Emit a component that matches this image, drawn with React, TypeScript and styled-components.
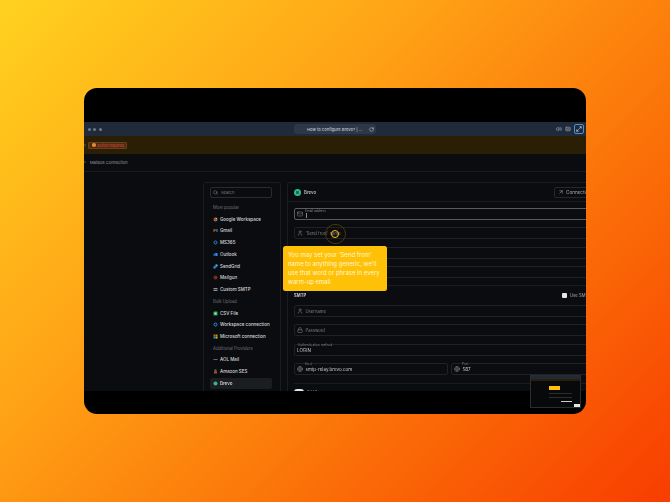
import React from "react";
import styled, {createGlobalStyle} from "styled-components";
import {ArrowUpRight, Captions, ChevronRight, Globe, Lock, Mail, Maximize2, RotateCw, Search, User, Volume2} from "lucide-react";

const GlobalStyle = createGlobalStyle`
  html, body {
    margin: 0;
    padding: 0;
  }
  body {
    font-family: Inter, "Liberation Sans", sans-serif;
  }
`;

const icons: Record<string, React.ReactNode> = {
  google: (
    <>
      <path d="M1 5a4 4 0 0 1 4-4v4z" fill="#ea4335" />
      <path d="M5 1a4 4 0 0 1 4 4H5z" fill="#fbbc05" />
      <path d="M9 5a4 4 0 0 1-4 4V5z" fill="#4285f4" />
      <path d="M5 9a4 4 0 0 1-4-4h4z" fill="#e8622a" />
    </>
  ),
  gmail: (
    <>
      <rect x="1" y="2" width="2" height="6" fill="#ea4335" />
      <rect x="3" y="3" width="2" height="2" fill="#fbbc05" />
      <rect x="5" y="3" width="2" height="2" fill="#34a853" />
      <rect x="7" y="2" width="2" height="6" fill="#4285f4" />
    </>
  ),
  ms365: <circle cx="5" cy="5" r="3" fill="none" stroke="#3b82d6" strokeWidth="2" />,
  outlook: (
    <>
      <rect x="4" y="2" width="5" height="6" fill="#2f8fd8" />
      <rect x="1" y="3" width="5" height="5" fill="#1667b5" />
    </>
  ),
  sendgrid: (
    <>
      <rect x="1" y="5" width="4" height="4" fill="#3aa3e3" />
      <rect x="5" y="1" width="4" height="4" fill="#7ec8f0" />
      <rect x="3" y="3" width="4" height="4" fill="#1a82c4" />
    </>
  ),
  mailgun: <circle cx="5" cy="5" r="4" fill="#7a2c1c" />,
  smtp: (
    <>
      <rect x="1" y="2" width="8" height="2.4" fill="#8d9096" />
      <rect x="1" y="5.6" width="8" height="2.4" fill="#8d9096" />
    </>
  ),
  csv: (
    <>
      <rect x="1" y="1" width="8" height="8" rx="1" fill="#2fa65a" />
      <rect x="3" y="3.5" width="4" height="3" fill="#bde8cd" />
    </>
  ),
  workspace: <circle cx="5" cy="5" r="3" fill="none" stroke="#2f8fe8" strokeWidth="2" />,
  microsoft: (
    <>
      <rect x="1" y="1" width="3.8" height="3.8" fill="#f25022" />
      <rect x="5.2" y="1" width="3.8" height="3.8" fill="#7fba00" />
      <rect x="1" y="5.2" width="3.8" height="3.8" fill="#00a4ef" />
      <rect x="5.2" y="5.2" width="3.8" height="3.8" fill="#ffb900" />
    </>
  ),
  aol: <rect x="1" y="4.4" width="8" height="1.2" fill="#a5a7ab" />,
  ses: (
    <>
      <rect x="3" y="1" width="4" height="4" fill="#8a6a4a" />
      <rect x="2" y="5" width="6" height="4" fill="#a8541f" />
    </>
  ),
  brevo: <circle cx="5" cy="5" r="4" fill="#2fb98f" />,
};

type Provider = {name: string; icon: string};

const popular: Provider[] = [
  {name: "Google Workspace", icon: "google"},
  {name: "Gmail", icon: "gmail"},
  {name: "MS365", icon: "ms365"},
  {name: "Outlook", icon: "outlook"},
  {name: "SendGrid", icon: "sendgrid"},
  {name: "Mailgun", icon: "mailgun"},
  {name: "Custom SMTP", icon: "smtp"},
];

const bulk: Provider[] = [
  {name: "CSV File", icon: "csv"},
  {name: "Workspace connection", icon: "workspace"},
  {name: "Microsoft connection", icon: "microsoft"},
];

const additional: Provider[] = [
  {name: "AOL Mail", icon: "aol"},
  {name: "Amazon SES", icon: "ses"},
  {name: "Brevo", icon: "brevo"},
];

function ProviderRow({provider}: {provider: Provider}) {
  return (
    <Row $active={provider.name === "Brevo"}>
      <RowIcon viewBox="0 0 10 10">{icons[provider.icon]}</RowIcon>
      {provider.name}
    </Row>
  );
}

export default function App() {
  return (
    <Page>
      <GlobalStyle />
      <Frame>
        <TopBlack />
        <Toolbar>
          <Dots>
            <Dot />
            <Dot />
            <Dot />
          </Dots>
          <UrlPill>
            <UrlText>How to configure Brevo? | ...</UrlText>
            <RotateCw size={5} strokeWidth={2.5} />
          </UrlPill>
          <ToolIcons>
            <Volume2 size={6} strokeWidth={2.5} />
            <Captions size={6} strokeWidth={2.5} />
            <ExpandButton>
              <Maximize2 size={6} strokeWidth={2.5} />
            </ExpandButton>
          </ToolIcons>
        </Toolbar>
        <AlertBand>
          <EdgeMark>›</EdgeMark>
          <AlertBadge>
            <AlertDot />
            Action required
            <ChevronRight size={4} strokeWidth={2.5} />
          </AlertBadge>
        </AlertBand>
        <NavBand>
          <EdgeMark>›</EdgeMark>
          <NavTitle>Mailbox Connection</NavTitle>
        </NavBand>
        <Content>
          <Sidebar>
            <SearchBox>
              <Search size={5} strokeWidth={2.5} />
              Search
            </SearchBox>
            <GroupLabel>Most popular</GroupLabel>
            {popular.map((p) => (
              <ProviderRow key={p.name} provider={p} />
            ))}
            <GroupLabel>Bulk Upload</GroupLabel>
            {bulk.map((p) => (
              <ProviderRow key={p.name} provider={p} />
            ))}
            <GroupLabel>Additional Providers</GroupLabel>
            {additional.map((p) => (
              <ProviderRow key={p.name} provider={p} />
            ))}
          </Sidebar>
          <Main>
            <MainHeader>
              <BrevoBadge>B</BrevoBadge>
              <MainTitle>Brevo</MainTitle>
              <ConnectionButton>
                <ArrowUpRight size={6} />
                Connection settings
              </ConnectionButton>
            </MainHeader>
            <Form>
              <Field $focused $gap={7}>
                <Mail size={6} />
                <FloatLabel $left={10} $inside>
                  Email address
                </FloatLabel>
                <Caret />
              </Field>
              <Field $gap={8}>
                <User size={6} />
                <Placeholder>'Send from' name</Placeholder>
              </Field>
              <Field $gap={7} />
              <Field $gap={7} />
              <Divider />
              <SmtpHead>
                <SmtpTitle>SMTP</SmtpTitle>
                <Checkline>
                  <CheckBox />
                  Use SMTP for sending
                </Checkline>
              </SmtpHead>
              <Field $gap={7}>
                <User size={6} />
                <Placeholder>Username</Placeholder>
              </Field>
              <Field $gap={8}>
                <Lock size={6} />
                <Placeholder>Password</Placeholder>
              </Field>
              <Field $gap={7}>
                <FloatLabel $left={3}>Authentication method</FloatLabel>
                <Value>LOGIN</Value>
              </Field>
              <HostRow>
                <Field $width={154}>
                  <Globe size={6} />
                  <FloatLabel $left={10}>Host</FloatLabel>
                  <Value>smtp-relay.brevo.com</Value>
                </Field>
                <Field $width={180}>
                  <Globe size={6} />
                  <FloatLabel $left={10}>Port</FloatLabel>
                  <Value>587</Value>
                </Field>
              </HostRow>
              <Divider />
              <ToggleRow>
                <Toggle />
                IMAP
              </ToggleRow>
            </Form>
          </Main>
        </Content>

        <FocusRing>
          <FocusDot />
        </FocusRing>
        <Tip>You may set your 'Send from' name to anything generic, we'll use that word or phrase in every warm-up email</Tip>
        <MiniMap>
          <MiniTop />
          <MiniAmber />
          <MiniBody>
            <MiniBar />
            <MiniLine />
            <MiniLine />
            <MiniWhite />
          </MiniBody>
          <MiniButton />
        </MiniMap>
      </Frame>
    </Page>
  );
}

const Page = styled.div`
  width: 670px;
  height: 502px;
  display: flex;
  align-items: center;
  justify-content: center;
  overflow: hidden;
  background: linear-gradient(135deg, #ffd21f 0%, #ffa416 35%, #fb7008 68%, #f83d00 100%);
`;

const Frame = styled.div`
  position: relative;
  width: 502px;
  height: 326px;
  display: flex;
  flex-direction: column;
  overflow: hidden;
  border-radius: 13px;
  background: #000;
  filter: blur(0.35px);
`;

const TopBlack = styled.div`
  height: 34px;
  flex: none;
`;

const Toolbar = styled.div`
  height: 14px;
  flex: none;
  display: flex;
  align-items: center;
  padding: 0 2px 0 3.5px;
  background: #1f2a3a;
  color: #9aa2ae;
`;

const Dots = styled.div`
  display: flex;
  gap: 2.6px;
  width: 206.5px;
`;

const Dot = styled.span`
  width: 3px;
  height: 3px;
  border-radius: 50%;
  background: #6f7884;
`;

const UrlPill = styled.div`
  width: 82px;
  height: 10px;
  display: flex;
  align-items: center;
  justify-content: space-between;
  box-sizing: border-box;
  padding: 0 2px 0 13px;
  border-radius: 3px;
  background: #2c3747;
  color: #c2c7cf;
`;

const UrlText = styled.span`
  font-size: 4.1px;
  font-weight: 500;
  white-space: nowrap;
`;

const ToolIcons = styled.div`
  margin-left: auto;
  display: flex;
  align-items: center;
  gap: 3px;
`;

const ExpandButton = styled.div`
  width: 10px;
  height: 10px;
  display: flex;
  align-items: center;
  justify-content: center;
  box-sizing: border-box;
  border: 1px solid #4d8fd6;
  border-radius: 2px;
  color: #d8dde4;
`;

const EdgeMark = styled.span`
  width: 4px;
  flex: none;
  color: #8a8d92;
  font-size: 5px;
  line-height: 5px;
`;

const AlertBand = styled.div`
  height: 18px;
  flex: none;
  display: flex;
  align-items: center;
  background: #2a1e05;
`;

const AlertBadge = styled.div`
  width: 39px;
  height: 7px;
  display: flex;
  align-items: center;
  gap: 1.5px;
  box-sizing: border-box;
  padding: 0 1px 0 3px;
  border: 0.5px solid #6a3f1c;
  border-radius: 1px;
  background: #4a2c14;
  color: #d9432f;
  font-size: 3.7px;
  font-weight: 500;
  white-space: nowrap;
`;

const AlertDot = styled.span`
  width: 3.5px;
  height: 3.5px;
  flex: none;
  border-radius: 50%;
  background: #e8862a;
`;

const NavBand = styled.div`
  height: 18px;
  flex: none;
  display: flex;
  align-items: center;
  box-sizing: border-box;
  border-bottom: 1px solid #1b1c20;
  background: #0b0c0f;
`;

const NavTitle = styled.span`
  margin-left: 2px;
  color: #9a9da3;
  font-size: 4px;
  white-space: nowrap;
`;

const Content = styled.div`
  height: 219px;
  flex: none;
  display: flex;
  align-items: flex-start;
  gap: 6px;
  padding: 10px 0 0 119px;
  box-sizing: border-box;
  overflow: hidden;
  background: #0b0c0f;
`;

const Sidebar = styled.div`
  width: 78px;
  height: 215px;
  flex: none;
  box-sizing: border-box;
  padding: 4px 8px 0 6px;
  border: 1px solid #1b1c20;
  border-radius: 3px;
`;

const SearchBox = styled.div`
  height: 11px;
  display: flex;
  align-items: center;
  gap: 3px;
  padding-left: 2px;
  margin-bottom: 3.5px;
  box-sizing: border-box;
  border: 1px solid #2a2b30;
  border-radius: 2px;
  color: #7c7f85;
  font-size: 4px;
`;

const GroupLabel = styled.div`
  height: 11.7px;
  display: flex;
  align-items: center;
  padding-left: 3px;
  color: #6f7278;
  font-size: 4.2px;
  white-space: nowrap;
`;

const Row = styled.div<{$active?: boolean}>`
  height: 11.75px;
  display: flex;
  align-items: center;
  gap: 2px;
  padding-left: 3px;
  border-radius: 2px;
  background: ${(p) => (p.$active ? "#1c1d21" : "transparent")};
  color: #d6d8dc;
  font-size: 4.5px;
  font-weight: 500;
  white-space: nowrap;
`;

const RowIcon = styled.svg`
  width: 5px;
  height: 5px;
  flex: none;
`;

const Main = styled.div`
  width: 400px;
  flex: none;
  border-left: 1px solid #1b1c20;
  border-top: 1px solid #1b1c20;
  border-top-left-radius: 3px;
`;

const MainHeader = styled.div`
  height: 18px;
  display: flex;
  align-items: center;
  gap: 3px;
  padding: 0 0 0 6px;
  border-bottom: 1px solid #1b1c20;
`;

const BrevoBadge = styled.div`
  width: 7px;
  height: 7px;
  display: flex;
  align-items: center;
  justify-content: center;
  border-radius: 50%;
  background: #2fb98f;
  color: #0b2b22;
  font-size: 4px;
  font-weight: 700;
`;

const MainTitle = styled.span`
  color: #c6c8cc;
  font-size: 4.4px;
  font-weight: 500;
`;

const ConnectionButton = styled.div`
  margin-left: 235px;
  height: 11px;
  display: flex;
  align-items: center;
  gap: 2px;
  padding: 0 4px 0 3px;
  box-sizing: border-box;
  border: 1px solid #26272b;
  border-radius: 2px;
  color: #a9abb0;
  font-size: 4.6px;
  white-space: nowrap;
`;

const Form = styled.div`
  padding: 6px 0 0 6px;
`;

const Field = styled.div<{$focused?: boolean; $gap?: number; $width?: number}>`
  position: relative;
  width: ${(p) => (p.$width ? `${p.$width}px` : "auto")};
  height: 12px;
  flex: none;
  display: flex;
  align-items: center;
  gap: 2.5px;
  padding-left: 2px;
  margin-bottom: ${(p) => p.$gap ?? 0}px;
  box-sizing: border-box;
  border: 1px solid ${(p) => (p.$focused ? "#5a5c60" : "#212226")};
  border-radius: 2px;
  color: #85888e;
`;

const FloatLabel = styled.span<{$left: number; $inside?: boolean}>`
  position: absolute;
  top: ${(p) => (p.$inside ? "1px" : "-1px")};
  left: ${(p) => p.$left}px;
  background: #0b0c0f;
  color: #85888e;
  font-size: 3.2px;
  line-height: 3px;
  white-space: nowrap;
`;

const Caret = styled.span`
  width: 0.5px;
  height: 5px;
  margin-top: 2px;
  background: #8a8d92;
`;

const Placeholder = styled.span`
  color: #7c7f85;
  font-size: 4.2px;
  white-space: nowrap;
`;

const Value = styled.span`
  color: #c6c8cc;
  font-size: 4.5px;
  white-space: nowrap;
`;

const Divider = styled.div`
  height: 1px;
  background: #1b1c20;
`;

const SmtpHead = styled.div`
  height: 19px;
  display: flex;
  align-items: center;
  justify-content: space-between;
`;

const SmtpTitle = styled.span`
  color: #c6c8cc;
  font-size: 4.2px;
  font-weight: 700;
`;

const Checkline = styled.div`
  width: 126px;
  display: flex;
  align-items: center;
  gap: 3px;
  color: #a9abb0;
  font-size: 4.2px;
  white-space: nowrap;
`;

const CheckBox = styled.span`
  width: 5px;
  height: 5px;
  border-radius: 1px;
  background: #e4e5e7;
`;

const HostRow = styled.div`
  display: flex;
  gap: 3px;
  margin-bottom: 8px;
`;

const ToggleRow = styled.div`
  display: flex;
  align-items: center;
  gap: 3px;
  margin-top: 5px;
  color: #85888e;
  font-size: 4.2px;
`;

const Toggle = styled.span`
  width: 10px;
  height: 6px;
  border-radius: 3px;
  background: #e4e5e7;
`;

const FocusRing = styled.div`
  position: absolute;
  left: 241px;
  top: 135.5px;
  width: 20.5px;
  height: 20.5px;
  display: flex;
  align-items: center;
  justify-content: center;
  box-sizing: border-box;
  border: 1px solid #4a3a08;
  border-radius: 50%;
`;

const FocusDot = styled.span`
  width: 8px;
  height: 8px;
  box-sizing: border-box;
  border: 1.6px solid #ffc107;
  border-radius: 50%;
`;

const Tip = styled.div`
  position: absolute;
  left: 199px;
  top: 158px;
  width: 104px;
  height: 45px;
  box-sizing: border-box;
  padding: 5px 4px 0 5px;
  border-radius: 2.5px;
  background: #ffc107;
  color: #fff6d6;
  font-size: 6px;
  line-height: 8.9px;
`;

const MiniMap = styled.div`
  position: absolute;
  left: 446px;
  top: 287px;
  width: 51px;
  height: 33px;
  display: flex;
  flex-direction: column;
  box-sizing: border-box;
  border: 1px solid #2c2d31;
  background: #08090b;
`;

const MiniTop = styled.div`
  height: 3px;
  background: #1f2a3a;
`;

const MiniAmber = styled.div`
  height: 2px;
  background: #2a1e05;
`;

const MiniBody = styled.div`
  flex: 1;
  display: flex;
  flex-direction: column;
  align-items: flex-start;
  gap: 3px;
  padding: 5px 0 0 18px;
`;

const MiniBar = styled.div`
  width: 11px;
  height: 4px;
  background: #ffc107;
`;

const MiniLine = styled.div`
  width: 23px;
  height: 1px;
  background: #2c2d31;
`;

const MiniWhite = styled.div`
  width: 11px;
  height: 1px;
  margin-left: 12px;
  background: #c9cacc;
`;

const MiniButton = styled.div`
  position: absolute;
  right: 0;
  bottom: 0;
  width: 6px;
  height: 3px;
  background: #e4e5e7;
`;
